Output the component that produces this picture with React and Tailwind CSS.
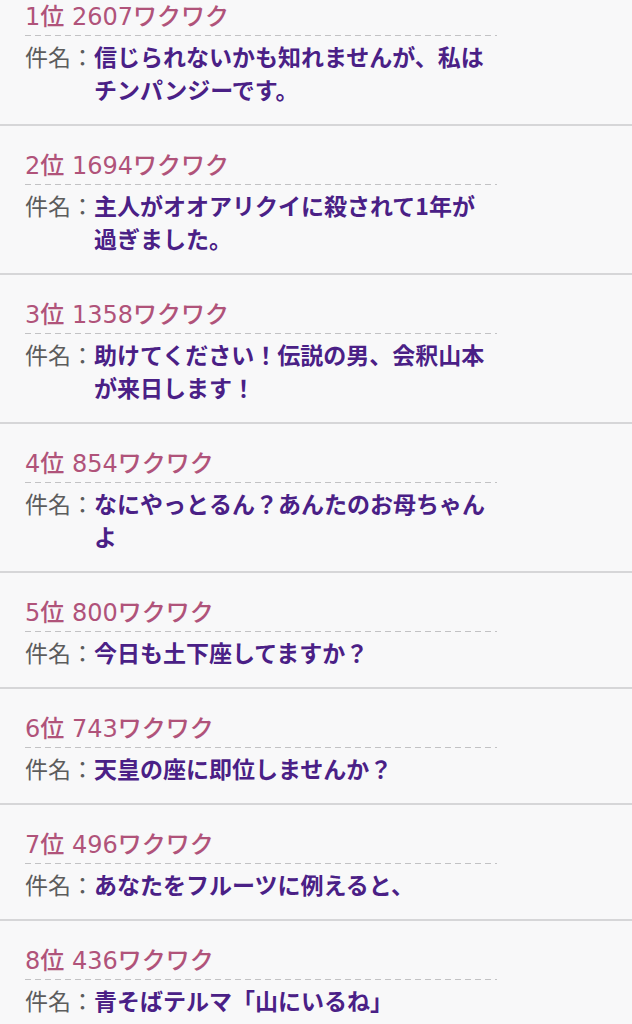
import React from "react";

const items = [
  { rank: 1, score: 2607, subject: "信じられないかも知れませんが、私はチンパンジーです。" },
  { rank: 2, score: 1694, subject: "主人がオオアリクイに殺されて1年が過ぎました。" },
  { rank: 3, score: 1358, subject: "助けてください！伝説の男、会釈山本が来日します！" },
  { rank: 4, score: 854, subject: "なにやっとるん？あんたのお母ちゃんよ" },
  { rank: 5, score: 800, subject: "今日も土下座してますか？" },
  { rank: 6, score: 743, subject: "天皇の座に即位しませんか？" },
  { rank: 7, score: 496, subject: "あなたをフルーツに例えると、" },
  { rank: 8, score: 436, subject: "青そばテルマ「山にいるね」" },
];

export default function App() {
  return (
    <div
      className="w-[632px] h-[1024px] overflow-hidden bg-[#f8f8f9]"
      style={{ fontFamily: '"Noto Sans CJK JP", "Noto Sans", sans-serif' }}
    >
      <div className="-mt-[23px]">
        {items.map((it) => (
          <div key={it.rank} className="border-b-2 border-[#d6d6d8] pt-[25px] pb-[18px] pl-[25px]">
            <div className="w-[472px]">
              <div
                className="text-[24px] leading-[30px] text-[#b0537a] font-medium pb-[3px]"
                style={{ fontFamily: '"DejaVu Sans", "Noto Sans CJK JP", sans-serif' }}
              >
                <span>{it.rank}</span>位 <span>{it.score}</span>ワクワク
              </div>
              <div className="h-[1px] w-full bg-[repeating-linear-gradient(90deg,#c2c2c4_0px,#c2c2c4_6px,transparent_6px,transparent_10px)]" />
              <div className="mt-[4px] flex text-[23px] leading-[33px]">
                <span className="shrink-0 text-[#5c5c5c]">件名：</span>
                <span className="flex-1 font-bold text-[#4a2086]">{it.subject}</span>
              </div>
            </div>
          </div>
        ))}
      </div>
    </div>
  );
}
